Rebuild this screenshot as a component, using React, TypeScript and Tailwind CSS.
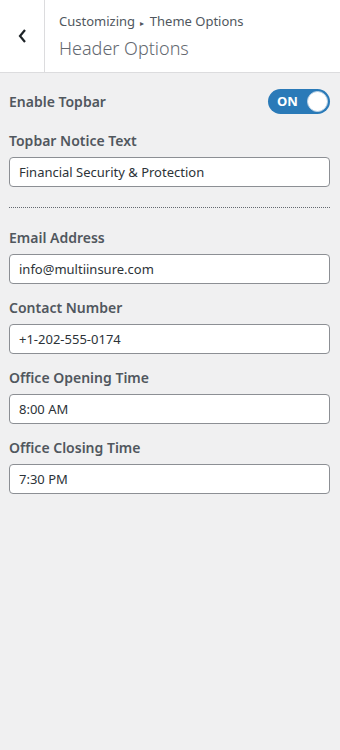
import { useState } from "react";

const fields = [
  { label: "Email Address", value: "info@multiinsure.com" },
  { label: "Contact Number", value: "+1-202-555-0174" },
  { label: "Office Opening Time", value: "8:00 AM" },
  { label: "Office Closing Time", value: "7:30 PM" },
];

function TextField({ label, value }: { label: string; value: string }) {
  return (
    <div className="flex flex-col">
      <label className="text-[14px] font-semibold text-[#50575e] leading-[20px] mb-[6px]">{label}</label>
      <input
        defaultValue={value}
        className="h-[30px] w-full rounded-[4px] border border-[#8c8f94] bg-white px-[9px] text-[13px] text-[#2c3338] outline-none"
      />
    </div>
  );
}

export default function App() {
  const [on, setOn] = useState(true);

  return (
    <div className="min-h-[750px] bg-[#f0f0f1] font-['Noto_Sans',sans-serif]">
      <div className="flex h-[73px] border-b border-[#dcdcde] bg-white">
        <button className="flex w-[45px] items-center justify-center border-r border-[#dcdcde]">
          <svg width="10" height="16" viewBox="0 0 10 16" fill="none">
            <path d="M8 2L3 8l5 6" stroke="#1d2327" strokeWidth="2.2" />
          </svg>
        </button>
        <div className="flex flex-col pl-[14px] pt-[11px]">
          <div className="text-[13px] leading-[20px] text-[#50575e]">
            Customizing <span className="mx-[2px] text-[8px] align-middle">▸</span> Theme Options
          </div>
          <div className="text-[18px] font-light leading-[30px] text-[#646970]">Header Options</div>
        </div>
      </div>

      <div className="flex flex-col pl-[9px] pr-[10px] pt-[16px]">
        <div className="flex items-center justify-between">
          <span className="text-[14px] font-semibold text-[#50575e]">Enable Topbar</span>
          <button
            onClick={() => setOn(!on)}
            className="flex h-[25px] w-[62px] items-center justify-between rounded-full bg-[#2a7ab8] pl-[9px] pr-[2px]"
          >
            <span className="text-[13px] font-bold text-white">ON</span>
            <span className="h-[21px] w-[21px] rounded-full border border-[#bcd3e6] bg-white" />
          </button>
        </div>

        <div className="mt-[17px]">
          <TextField label="Topbar Notice Text" value="Financial Security & Protection" />
        </div>

        <div className="mt-[20px] border-t border-dotted border-[#646970]" />

        <div className="mt-[20px] flex flex-col gap-[14px]">
          {fields.map((f) => (
            <TextField key={f.label} label={f.label} value={f.value} />
          ))}
        </div>
      </div>
    </div>
  );
}
